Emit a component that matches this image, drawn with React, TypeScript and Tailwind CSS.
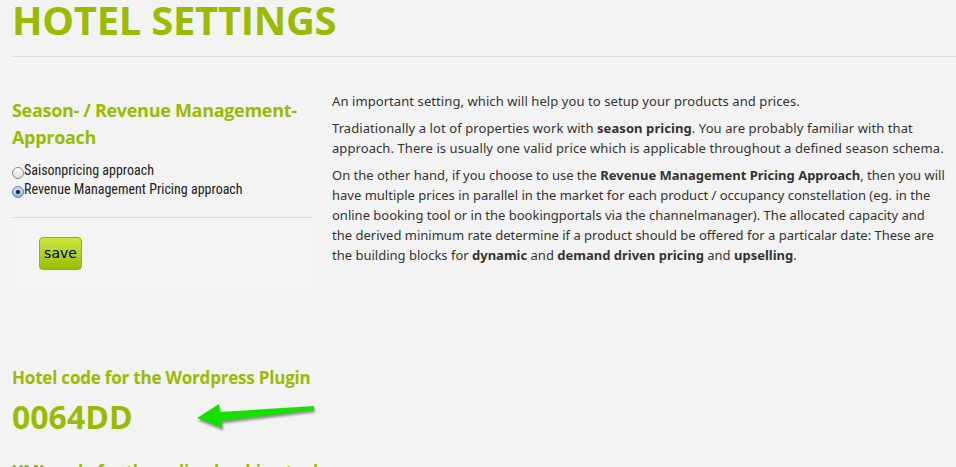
import React from "react";

const green = "text-[#9abb00]";

export default function App() {
  return (
    <div className="h-[467px] w-[956px] overflow-hidden bg-[#f3f3f3] pl-[12px]" style={{ fontFamily: '"Open Sans", sans-serif' }}>
      <h1 className={`${green} text-[40px] font-bold leading-[40px] tracking-[-0.3px]`}>
        HOTEL SETTINGS
      </h1>
      <div className="mt-[16px] h-px bg-[#dcdcdc]" />
      <div className="flex gap-[20px] pt-[40px]">
        <div className="w-[300px] shrink-0">
          <h2 className={`${green} whitespace-nowrap text-[18px] font-bold leading-[27px] tracking-[-0.3px]`}>
            Season- / Revenue Management-
            <br />
            Approach
          </h2>
          <div className="mt-[10px] flex flex-col text-[14px] leading-[19px] text-[#222]" style={{ fontFamily: '"Liberation Sans Narrow", "Roboto Condensed", "Noto Sans", sans-serif' }}>
            <label className="flex items-center">
              <span className="mt-[4px] inline-block h-[12px] w-[12px] rounded-full border border-[#8a8a8a] bg-gradient-to-b from-[#fefefe] to-[#dcdcdc]" />
              <span>Saisonpricing approach</span>
            </label>
            <label className="flex items-center">
              <span className="mt-[4px] flex h-[12px] w-[12px] items-center justify-center rounded-full border border-[#5a7fb8] bg-gradient-to-b from-[#cfe0f7] to-[#8fb4e6]">
                <span className="h-[4px] w-[4px] rounded-full bg-[#1a1a1a]" />
              </span>
              <span>Revenue Management Pricing approach</span>
            </label>
          </div>
          <div className="mt-[18px] h-px bg-[#e0e0e0]" />
          <div className="h-[76px] bg-[#f4f4f4] pl-[27px] pt-[19px]">
            <button className="flex h-[33px] w-[43px] items-center justify-center rounded-[4px] border border-[#92b400] bg-gradient-to-b from-[#cde63c] to-[#97bf00] text-[14px] text-black" style={{ fontFamily: '"DejaVu Sans", sans-serif' }}>
              save
            </button>
          </div>
        </div>
        <div className="w-[624px] whitespace-nowrap text-[13px] leading-[20px] tracking-[0.08px] text-[#333]" style={{ fontFamily: '"Noto Sans", sans-serif' }}>
          <p className="-mt-[6px]">An important setting, which will help you to setup your products and prices.</p>
          <p className="mt-[7px]">
            Tradiationally a lot of properties work with <b>season pricing</b>. You are probably familiar with that
            <br />
            approach. There is usually one valid price which is applicable throughout a defined season schema.
          </p>
          <p className="mt-[7px] tracking-[0px]">
            On the other hand, if you choose to use the <b>Revenue Management Pricing Approach</b>, then you will
            <br />
            have multiple prices in parallel in the market for each product / occupancy constellation (eg. in the
            <br />
            online booking tool or in the bookingportals via the channelmanager). The allocated capacity and
            <br />
            the derived minimum rate determine if a product should be offered for a particalar date: These are
            <br />
            the building blocks for <b>dynamic</b> and <b>demand driven pricing</b> and <b>upselling</b>.
          </p>
        </div>
      </div>
      <div className="relative mt-[72px]">
        <h3 className={`${green} text-[17px] font-bold leading-[24px] tracking-[-0.2px]`}>Hotel code for the Wordpress Plugin</h3>
        <div className={`${green} mt-[9px] text-[32px] font-bold leading-[36px]`}>0064DD</div>
        <svg className="absolute left-[178px] top-[30px]" width="135" height="40" viewBox="0 0 135 40">
          <defs>
            <filter id="sh" x="-10%" y="-30%" width="130%" height="180%">
              <feGaussianBlur stdDeviation="1.3" />
            </filter>
          </defs>
          <path d="M7 22 L29 8 L30 16 L124 10 L124 14 L32 25 L32 32 Z" transform="translate(1,2.5)" fill="#444" opacity="0.55" filter="url(#sh)" />
          <path d="M7 22 L29 8 L30 16 L124 10 L124 14 L32 25 L32 32 Z" fill="#17e000" />
        </svg>
        <h3 className={`${green} mt-[25px] text-[17px] font-bold leading-[24px] tracking-[-0.2px]`}>XML-code for the online booking tool</h3>
      </div>
    </div>
  );
}
